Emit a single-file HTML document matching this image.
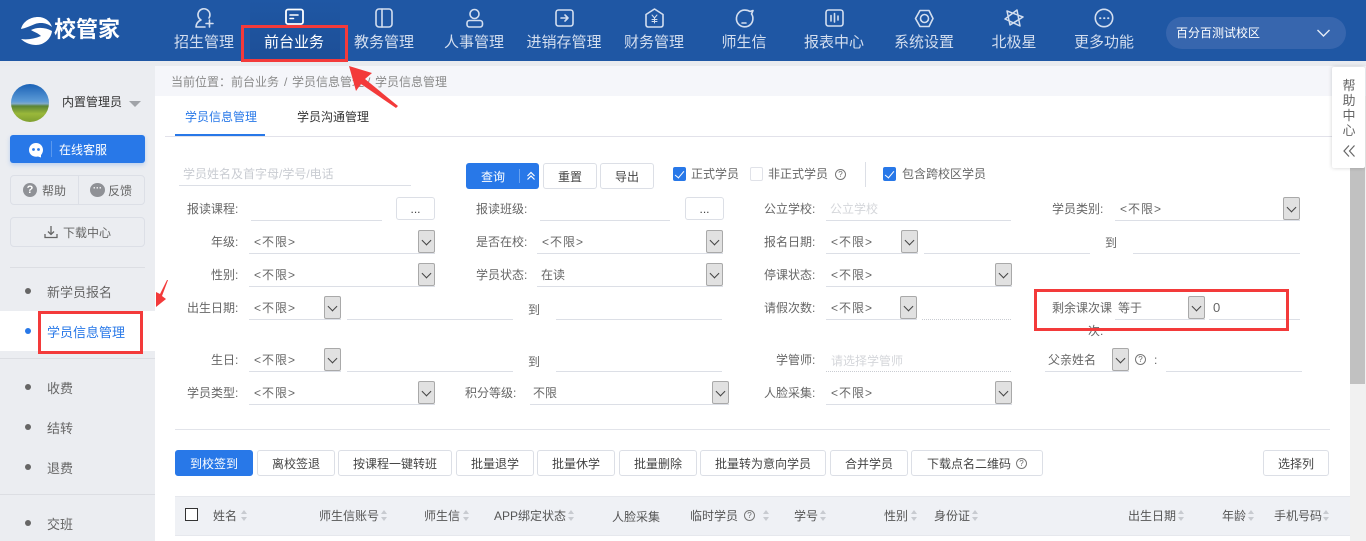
<!DOCTYPE html>
<html><head><meta charset="utf-8"><title>校管家</title>
<style>
html,body{margin:0;padding:0;width:1366px;height:541px;overflow:hidden;background:#fff}
body{position:relative;font-family:"Liberation Sans","Noto Sans CJK SC",sans-serif;font-size:12px;color:#666}
div,span,i{box-sizing:border-box}
.b{position:absolute}
.t{position:absolute;white-space:nowrap;line-height:20px;height:20px}
.f{margin-top:1px}
.n{position:absolute;top:33px;width:90px;text-align:center;font-size:15px;line-height:20px;color:#d3deef;white-space:nowrap}
.m{position:absolute;left:47px;margin-top:1px;font-size:13px;line-height:20px;color:#666;white-space:nowrap}
.d{position:absolute;left:25px;width:6px;height:6px;border-radius:50%;background:#666}
.hl{position:absolute;left:0;width:155px;height:1px;background:#dcdee3}
.sel{position:absolute;height:24px;border-bottom:1px solid #dcdfe6;padding-left:5px;line-height:25px;color:#666;white-space:nowrap;letter-spacing:1px}
.sel i{position:absolute;right:0;top:0;width:17px;height:23px;background:#e1e1e1;border:1px solid #a9a9a9;border-radius:2px}
.sel i:after{content:"";position:absolute;left:4px;top:6px;width:6px;height:6px;border-right:1px solid #444;border-bottom:1px solid #444;transform:rotate(45deg)}
.u{position:absolute;height:1px;background:#dcdfe6}
.btn{position:absolute;top:450px;height:26px;border:1px solid #dcdfe6;border-radius:3px;background:#fff;text-align:center;line-height:26px;color:#444;white-space:nowrap}
.bp{background:#2878e8;border-color:#2878e8;color:#fff}
.dots{position:absolute;width:39px;height:23px;top:197px;border:1px solid #dcdfe6;border-radius:3px;background:#fff;text-align:center;line-height:23px;color:#444}
.cb{position:absolute;top:167px;width:13px;height:14px;border-radius:2px;background:#2878e8}
.cb:after{content:"";position:absolute;left:4px;top:2px;width:4px;height:8px;border-right:1.5px solid #fff;border-bottom:1.5px solid #fff;transform:rotate(40deg)}
.s{position:absolute;top:510px;width:7px;height:11px}
.s:before,.s:after{content:"";position:absolute;left:0;border-left:3.5px solid transparent;border-right:3.5px solid transparent}
.s:before{top:0;border-bottom:4px solid #c8cbd0}
.s:after{bottom:0;border-top:4px solid #c8cbd0}
.q{position:absolute;width:11px;height:11px;border:1px solid #777;border-radius:50%;font-size:8px;line-height:9px;text-align:center;color:#666}
.th{position:absolute;top:506px;line-height:20px;color:#555;white-space:nowrap}
</style></head><body>

<div class="b" style="left:0;top:0;width:1366px;height:61px;background:#1f57a4"></div>
<div class="b" style="left:250px;top:0;width:90px;height:61px;background:linear-gradient(#1f57a4,#1d4f97)"></div>
<div class="b" style="left:0;top:61px;width:1366px;height:5px;background:#e9ebef"></div>
<div class="b" style="left:0;top:66px;width:155px;height:475px;background:#ebedf1"></div>
<div class="b" style="left:155px;top:66px;width:1211px;height:30px;background:#f5f6fa"></div>

<svg class="b" style="left:0;top:0" width="1366" height="61" viewBox="0 0 1366 61" fill="none" stroke="#d3deef" stroke-width="1.600" stroke-linecap="round" stroke-linejoin="round">
<path fill="#fff" stroke="none" d="M21 29C23 21 31 17 38 17C45 17 50 21 52 27C47 23 41 22 35 24C30 26 26 28 21 29Z"/>
<path fill="#fff" stroke="none" d="M31 30C37 27 45 27 52 31C51 39 44 45 36 45C31 45 25 43 21 39C27 40 34 39 41 36C38 33 34 32 31 30Z"/>
<path d="M209 18A6 6 0 1 0 201 20C198 21 196 24 196 27H205M206 23.500H213M209.500 20V27"/>
<rect x="286" y="9.500" width="17" height="14.500" rx="2" stroke="#fff" stroke-width="1.800"/><path d="M290 15H298M290 18.500H293.500" stroke="#fff"/>
<rect x="376" y="9" width="16" height="18" rx="3"/><path d="M382 9V27"/>
<circle cx="474.500" cy="14" r="4.500"/><rect x="467" y="20.500" width="15.500" height="6.500" rx="2.500"/>
<rect x="556" y="10" width="17" height="16" rx="2.500"/><path d="M561 18H568M565 15L568 18L565 21"/>
<path d="M646 14.500L654.500 9L663 14.500V25C663 26 662 27 661 27H648C647 27 646 26 646 25Z"/><path d="M652 15L654.500 18L657 15M654.500 18V23M652 19.500H657M652 21.500H657" stroke-width="1"/>
<path d="M750 11.500C747 9.500 742 9.500 739.500 12C736 15 735.500 20 738 23.500C741 27.500 747 28 750.500 24.500C753.500 21.500 753.500 16.500 751.500 14L753 10.500Z"/><path d="M742 23H746"/>
<rect x="826" y="10" width="17" height="16" rx="2.500"/><path d="M831 15.500V21M834.500 13.500V22M838 16V20"/>
<path d="M915.500 18.500L920 10.500H929L933 18.500L929 26.500H920Z"/><circle cx="924.500" cy="18.500" r="4"/>
<path d="M1007 11L1023 17L1010 25Z M1017 10L1020 26L1005 19Z" stroke-width="1.500"/>
<circle cx="1104" cy="18" r="8.700"/><path d="M1100 18.200H1100.500M1104 18.200H1104.500M1108 18.200H1108.500" stroke-width="1.800"/>
</svg>
<div class="t" style="left:54px;top:17px;height:26px;line-height:26px;font-size:22px;font-weight:bold;color:#fff;letter-spacing:0">校管家</div>

<div class="n" style="left:159px">招生管理</div>
<div class="n" style="left:249px;color:#fff">前台业务</div>
<div class="n" style="left:339px">教务管理</div>
<div class="n" style="left:429px">人事管理</div>
<div class="n" style="left:519px">进销存管理</div>
<div class="n" style="left:609px">财务管理</div>
<div class="n" style="left:699px">师生信</div>
<div class="n" style="left:789px">报表中心</div>
<div class="n" style="left:879px">系统设置</div>
<div class="n" style="left:969px">北极星</div>
<div class="n" style="left:1059px">更多功能</div>

<div class="b" style="left:1166px;top:17px;width:180px;height:32px;border-radius:16px;background:#3766ae"></div>
<div class="t" style="left:1176px;top:23px;color:#fff">百分百测试校区</div>
<svg class="b" style="left:1316px;top:28px" width="15" height="10" fill="none" stroke="#e5ecf6" stroke-width="1.400"><path d="M1.500 2L7.500 8L13.500 2"/></svg>

<!-- sidebar -->
<div class="b" style="left:11px;top:84px;width:38px;height:38px;border-radius:50%;background:linear-gradient(#1b62b6 0,#5b9ad6 45%,#7fa9c8 52%,#5a8436 58%,#9ab83a 78%,#7f9f30 100%)"></div>
<div class="t" style="left:62px;top:92px;color:#333">内置管理员</div>
<div class="b" style="left:129px;top:101px;width:0;height:0;border-left:6px solid transparent;border-right:6px solid transparent;border-top:6px solid #a0a3a8"></div>

<div class="b" style="left:10px;top:135px;width:135px;height:28px;background:#2878e8;border-radius:3px;box-shadow:0 2px 4px rgba(40,120,232,.25)"></div>
<svg class="b" style="left:28px;top:142px" width="16" height="16"><path fill="#fff" d="M8 1C12 1 15 4 15 8C15 10 14 12 13 13L13 15.500L10 14.500C6 15.500 1 13 1 8C1 4 4 1 8 1Z"/><circle cx="5.500" cy="7.500" r="1.400" fill="#2878e8"/><circle cx="10.500" cy="7.500" r="1.400" fill="#2878e8"/></svg>
<div class="b" style="left:51px;top:141px;width:1px;height:16px;background:#5a98ee"></div>
<div class="t" style="left:59px;top:140px;color:#fff">在线客服</div>

<div class="b" style="left:10px;top:175px;width:135px;height:30px;border:1px solid #dcdfe6;border-radius:4px"></div>
<div class="b" style="left:78px;top:175px;width:1px;height:30px;background:#dcdfe6"></div>
<div class="b" style="left:23px;top:183px;width:14px;height:14px;border-radius:50%;background:#8f9196;color:#fff;font-size:11px;line-height:14px;text-align:center;font-weight:bold">?</div>
<div class="t" style="left:42px;top:181px">帮助</div>
<div class="b" style="left:90px;top:183px;width:15px;height:14px;border-radius:50%;background:#8f9196;color:#fff;font-size:9px;line-height:10px;text-align:center;font-weight:bold">···</div>
<div class="t" style="left:108px;top:181px">反馈</div>

<div class="b" style="left:10px;top:217px;width:135px;height:30px;border:1px solid #dcdfe6;border-radius:4px"></div>
<svg class="b" style="left:44px;top:225px" width="14" height="14" fill="none" stroke="#666" stroke-width="1.300"><path d="M7 1V9M4 6.500L7 9.500L10 6.500M1 9V12.500H13V9"/></svg>
<div class="t" style="left:63px;top:223px">下载中心</div>

<div class="hl" style="left:10px;width:135px;top:267px"></div>
<div class="d" style="top:288px"></div><div class="m" style="top:282px">新学员报名</div>
<div class="b" style="left:0;top:311px;width:155px;height:40px;background:#fff"></div>
<div class="d" style="top:328px;background:#2878e8"></div><div class="m" style="top:322px;color:#2878e8">学员信息管理</div>
<div class="hl" style="top:358px"></div>
<div class="d" style="top:384px"></div><div class="m" style="top:378px">收费</div>
<div class="d" style="top:424px"></div><div class="m" style="top:418px">结转</div>
<div class="d" style="top:464px"></div><div class="m" style="top:458px">退费</div>
<div class="hl" style="top:494px"></div>
<div class="d" style="top:520px"></div><div class="m" style="top:514px">交班</div>

<!-- main -->
<div class="t" style="left:171px;top:72px;color:#8a8a8a">当前位置：</div>
<div class="t" style="left:231px;top:72px;color:#8a8a8a">前台业务</div>
<div class="t" style="left:284px;top:72px;color:#8a8a8a">/</div>
<div class="t" style="left:292px;top:72px;color:#8a8a8a">学员信息管理</div>
<div class="t" style="left:367px;top:72px;color:#8a8a8a">/</div>
<div class="t" style="left:375px;top:72px;color:#8a8a8a">学员信息管理</div>
<div class="t" style="left:185px;top:107px;color:#2878e8">学员信息管理</div>
<div class="b" style="left:175px;top:134px;width:90px;height:2px;background:#2878e8"></div>
<div class="t" style="left:297px;top:107px;color:#333">学员沟通管理</div>
<div class="b" style="left:165px;top:136px;width:1167px;height:1px;background:#e2e2ea"></div>

<div class="t" style="left:183px;top:164px;color:#c9ccd2">学员姓名及首字母/学号/电话</div>
<div class="u" style="left:179px;top:185px;width:232px"></div>
<div class="b" style="left:466px;top:163px;width:73px;height:26px;background:#2878e8;border-radius:3px"></div>
<div class="t" style="left:481px;top:167px;color:#fff">查询</div>
<div class="b" style="left:519px;top:169px;width:1px;height:14px;background:#6aa2ef"></div>
<svg class="b" style="left:526px;top:171px" width="10" height="10" fill="none" stroke="#fff" stroke-width="1.200"><path d="M1.500 5L5 1.500L8.500 5M1.500 8.500L5 5L8.500 8.500"/></svg>
<div class="btn" style="left:543px;top:163px;width:54px">重置</div>
<div class="btn" style="left:600px;top:163px;width:54px">导出</div>

<div class="cb" style="left:673px"></div><div class="t" style="left:691px;top:164px">正式学员</div>
<div class="b" style="left:750px;top:167px;width:13px;height:14px;border:1px solid #e0e2e8;border-radius:2px"></div>
<div class="t" style="left:768px;top:164px">非正式学员</div><div class="q" style="left:835px;top:169px">?</div>
<div class="b" style="left:865px;top:162px;width:1px;height:25px;background:#dcdfe6"></div>
<div class="cb" style="left:883px"></div><div class="t" style="left:902px;top:164px">包含跨校区学员</div>

<!-- row 1 -->
<div class="t f" style="left:187px;top:198px">报读课程:</div>
<div class="u" style="left:251px;top:220px;width:131px"></div>
<div class="dots" style="left:396px">...</div>
<div class="t f" style="left:476px;top:198px">报读班级:</div>
<div class="u" style="left:540px;top:220px;width:130px"></div>
<div class="dots" style="left:685px">...</div>
<div class="t f" style="left:764px;top:198px">公立学校:</div>
<div class="u" style="left:826px;top:220px;width:185px"></div>
<div class="t f" style="left:830px;top:198px;color:#d4d6da">公立学校</div>
<div class="t f" style="left:1052px;top:198px">学员类别:</div>
<div class="sel" style="left:1115px;top:197px;width:185px">&lt;不限&gt;<i></i></div>

<!-- row 2 -->
<div class="t f" style="left:211px;top:231px">年级:</div>
<div class="sel" style="left:249px;top:230px;width:186px">&lt;不限&gt;<i></i></div>
<div class="t f" style="left:476px;top:231px">是否在校:</div>
<div class="sel" style="left:537px;top:230px;width:186px">&lt;不限&gt;<i></i></div>
<div class="t f" style="left:764px;top:231px">报名日期:</div>
<div class="sel" style="left:826px;top:230px;width:92px">&lt;不限&gt;<i></i></div>
<div class="u" style="left:924px;top:253px;width:166px"></div>
<div class="t f" style="left:1105px;top:232px">到</div>
<div class="u" style="left:1133px;top:253px;width:167px"></div>

<!-- row 3 -->
<div class="t f" style="left:211px;top:264px">性别:</div>
<div class="sel" style="left:249px;top:263px;width:186px">&lt;不限&gt;<i></i></div>
<div class="t f" style="left:476px;top:264px">学员状态:</div>
<div class="sel" style="left:537px;top:263px;width:186px;padding-left:4px;letter-spacing:0">在读<i></i></div>
<div class="t f" style="left:764px;top:264px">停课状态:</div>
<div class="sel" style="left:826px;top:263px;width:186px">&lt;不限&gt;<i></i></div>

<!-- row 4 -->
<div class="t f" style="left:187px;top:297px">出生日期:</div>
<div class="sel" style="left:249px;top:296px;width:92px">&lt;不限&gt;<i></i></div>
<div class="u" style="left:347px;top:319px;width:166px"></div>
<div class="t f" style="left:528px;top:299px">到</div>
<div class="u" style="left:556px;top:319px;width:166px"></div>
<div class="t f" style="left:764px;top:297px">请假次数:</div>
<div class="sel" style="left:826px;top:296px;width:91px">&lt;不限&gt;<i></i></div>
<div class="b" style="left:922px;top:319px;width:89px;border-top:1px dotted #c9ccd2"></div>
<div class="t f" style="left:1052px;top:297px">剩余课次课</div>
<div class="sel" style="left:1115px;top:296px;width:90px;padding-left:3px;letter-spacing:0">等于<i></i></div>
<div class="u" style="left:1209px;top:319px;width:91px"></div>
<div class="t f" style="left:1213px;top:297px;font-size:13px">0</div>
<div class="t f" style="left:1088px;top:320px">次:</div>

<!-- row 5 -->
<div class="t f" style="left:211px;top:349px">生日:</div>
<div class="sel" style="left:249px;top:348px;width:92px">&lt;不限&gt;<i></i></div>
<div class="u" style="left:347px;top:371px;width:166px"></div>
<div class="t f" style="left:528px;top:351px">到</div>
<div class="u" style="left:556px;top:371px;width:166px"></div>
<div class="t f" style="left:776px;top:349px">学管师:</div>
<div class="t f" style="left:831px;top:350px;color:#d4d6da">请选择学管师</div>
<div class="b" style="left:826px;top:371px;width:185px;border-top:1px dotted #c9ccd2"></div>
<div class="sel" style="left:1045px;top:348px;width:84px;padding-left:3px;letter-spacing:0">父亲姓名<i></i></div>
<div class="q" style="left:1135px;top:354px">?</div>
<div class="t f" style="left:1154px;top:349px">:</div>
<div class="u" style="left:1166px;top:371px;width:136px"></div>

<!-- row 6 -->
<div class="t f" style="left:187px;top:382px">学员类型:</div>
<div class="sel" style="left:249px;top:381px;width:186px">&lt;不限&gt;<i></i></div>
<div class="t f" style="left:465px;top:382px">积分等级:</div>
<div class="sel" style="left:530px;top:381px;width:199px;padding-left:3px;letter-spacing:0">不限<i></i></div>
<div class="t f" style="left:764px;top:382px">人脸采集:</div>
<div class="sel" style="left:826px;top:381px;width:186px">&lt;不限&gt;<i></i></div>

<div class="b" style="left:175px;top:429px;width:1155px;height:1px;background:#e2e4ea"></div>

<!-- buttons -->
<div class="btn bp" style="left:175px;width:78px">到校签到</div>
<div class="btn" style="left:257px;width:78px">离校签退</div>
<div class="btn" style="left:338px;width:114px">按课程一键转班</div>
<div class="btn" style="left:456px;width:78px">批量退学</div>
<div class="btn" style="left:537px;width:78px">批量休学</div>
<div class="btn" style="left:619px;width:78px">批量删除</div>
<div class="btn" style="left:700px;width:126px">批量转为意向学员</div>
<div class="btn" style="left:830px;width:78px">合并学员</div>
<div class="btn" style="left:911px;width:132px;text-align:left;padding-left:15px">下载点名二维码</div>
<div class="q" style="left:1016px;top:458px">?</div>
<div class="btn" style="left:1263px;width:66px">选择列</div>

<!-- table header -->
<div class="b" style="left:175px;top:496px;width:1175px;height:40px;background:#eff1f5;border-top:1px solid #e6e8ed;border-bottom:1px solid #e6e8ed"></div>
<div class="b" style="left:185px;top:508px;width:13px;height:13px;border:1.500px solid #333;background:#fff"></div>
<div class="th" style="left:213px">姓名</div><span class="s" style="left:241px"></span>
<div class="th" style="left:319px">师生信账号</div><span class="s" style="left:381px"></span>
<div class="th" style="left:424px">师生信</div><span class="s" style="left:463px"></span>
<div class="th" style="left:494px">APP绑定状态</div><span class="s" style="left:568px"></span>
<div class="th" style="left:612px;top:507px">人脸采集</div>
<div class="th" style="left:690px">临时学员</div><div class="q" style="left:744px;top:510px">?</div><span class="s" style="left:763px"></span>
<div class="th" style="left:794px">学号</div><span class="s" style="left:820px"></span>
<div class="th" style="left:884px">性别</div><span class="s" style="left:911px"></span>
<div class="th" style="left:934px">身份证</div><span class="s" style="left:972px"></span>
<div class="th" style="left:1128px">出生日期</div><span class="s" style="left:1178px"></span>
<div class="th" style="left:1222px">年龄</div><span class="s" style="left:1248px"></span>
<div class="th" style="left:1274px">手机号码</div><span class="s" style="left:1323px"></span>

<!-- scrollbar -->
<div class="b" style="left:1350px;top:96px;width:16px;height:445px;background:#f1f1f1"></div>
<div class="b" style="left:1350px;top:96px;width:15px;height:288px;background:#c1c1c1"></div>

<!-- help -->
<div class="b" style="left:1332px;top:67px;width:33px;height:101px;background:#fff;border-radius:2px;box-shadow:0 0 4px rgba(0,0,0,.18)"></div>
<div class="b" style="left:1341px;top:78px;width:16px;font-size:13px;line-height:15px;text-align:center;color:#666">帮<br>助<br>中<br>心</div>
<svg class="b" style="left:1343px;top:144px" width="13" height="14" fill="none" stroke="#666" stroke-width="1.200"><path d="M6 1.500L1 7L6 12.500M11.500 1.500L6.500 7L11.500 12.500"/></svg>

<!-- annotations -->
<div class="b" style="left:241px;top:25px;width:107px;height:37px;border:3px solid #f33a3a"></div>
<div class="b" style="left:38px;top:311px;width:105px;height:43px;border:3px solid #f33a3a"></div>
<div class="b" style="left:1034px;top:289px;width:255px;height:42px;border:3px solid #f33a3a"></div>
<svg class="b" style="left:0;top:0" width="1366" height="541"><polygon fill="#f33a3a" points="349,66 372,73 365,79 398,106 396,108 361,84 356,91"/><polygon fill="#f33a3a" points="168,280 162,296 166,299 156,307 156,292 160,294 167,280"/></svg>

</body></html>
